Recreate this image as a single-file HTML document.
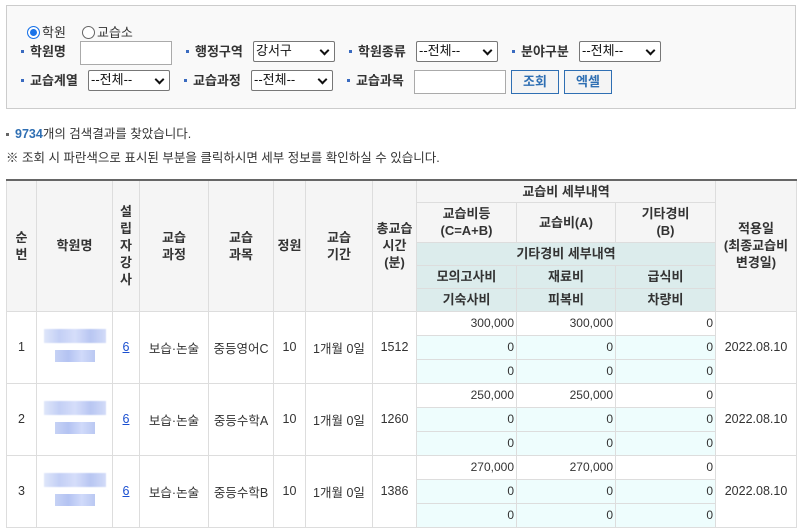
<!DOCTYPE html>
<html><head><meta charset="utf-8"><style>
*{box-sizing:border-box;margin:0;padding:0}
body{width:802px;height:526px;overflow:hidden;background:#fff;font-family:"Liberation Sans","Noto Sans CJK KR",sans-serif;font-size:13px;color:#333;position:relative}
.a{position:absolute;white-space:nowrap}
.box{left:6px;top:5px;width:790px;height:104px;background:#f9f9f9;border:1px solid #ccc}
.lb{font-weight:bold;color:#333;font-size:13px;line-height:16px}
.lb:before{content:"";display:inline-block;width:3px;height:3px;background:#3a6bc0;vertical-align:middle;margin-right:6px;position:relative;top:-1px}
.inp{background:#fff;border:1px solid #aaa}
.sel{background:#fff;border:1px solid #777;border-radius:2px;font-size:13px;line-height:18px;padding-left:2px;color:#111}
.sel:after{content:"";position:absolute;right:6px;top:5px;width:5px;height:5px;border-right:2px solid #111;border-bottom:2px solid #111;transform:rotate(45deg)}
.btn{border:1px solid #2f6fb3;background:#f4f4f4;color:#2f6fb3;font-weight:bold;text-align:center;line-height:21px}
.rad{width:13px;height:13px;border-radius:50%;border:1px solid #666;background:#fff;display:inline-block;vertical-align:-2px;margin-right:2px}
.rad.on{border:1px solid #1a73e8;box-shadow:inset 0 0 0 2px #fff;background:#1a73e8}
table{position:absolute;left:6px;top:179px;border-collapse:collapse;table-layout:fixed;border-top:2px solid #666}
td,th{border:1px solid #ddd;text-align:center;font-size:13px;padding:0}
th{background:#f5f5f5;font-weight:bold;color:#333;line-height:17px}
th.t{background:#dcecec}
td{color:#333;font-size:12.5px}
td.n{text-align:right;padding-right:2px;font-size:12px}
td.c{background:#eefdfd}
.blur{display:inline-block;width:62px;height:14px;background:linear-gradient(90deg,#dfe6fa,#c3cff5,#d6defa,#b8c6f2,#d2dbf8);filter:blur(0.5px)}
.blur2{display:inline-block;width:40px;height:12px;margin-top:4px;background:linear-gradient(90deg,#c6d2f5,#b4c3f2,#d0dafa,#bac8f2)}
a{color:#1a4fd0;text-decoration:underline}
</style></head><body>
<div class="a box"></div>
<div class="a" style="left:27px;top:22px"><span class="rad on"></span>학원</div>
<div class="a" style="left:82px;top:22px"><span class="rad"></span>교습소</div>

<div class="a lb" style="left:21px;top:44px">학원명</div>
<div class="a inp" style="left:80px;top:41px;width:92px;height:24px"></div>
<div class="a lb" style="left:186px;top:44px">행정구역</div>
<div class="a sel" style="left:253px;top:41px;width:82px;height:21px">강서구</div>
<div class="a lb" style="left:349px;top:44px">학원종류</div>
<div class="a sel" style="left:416px;top:41px;width:82px;height:21px">--전체--</div>
<div class="a lb" style="left:512px;top:44px">분야구분</div>
<div class="a sel" style="left:579px;top:41px;width:82px;height:21px">--전체--</div>

<div class="a lb" style="left:21px;top:73px">교습계열</div>
<div class="a sel" style="left:88px;top:70px;width:82px;height:21px">--전체--</div>
<div class="a lb" style="left:184px;top:73px">교습과정</div>
<div class="a sel" style="left:251px;top:70px;width:82px;height:21px">--전체--</div>
<div class="a lb" style="left:347px;top:73px">교습과목</div>
<div class="a inp" style="left:414px;top:70px;width:92px;height:24px"></div>
<div class="a btn" style="left:511px;top:70px;width:48px;height:24px">조회</div>
<div class="a btn" style="left:564px;top:70px;width:48px;height:24px">엑셀</div>

<div class="a" style="left:6px;top:123px;font-size:12.5px"><span style="display:inline-block;width:3px;height:3px;background:#666;vertical-align:middle;margin-right:6px"></span><b style="color:#2f6fb3">9734</b>개의 검색결과를 찾았습니다.</div>
<div class="a" style="left:6px;top:147px;font-size:12.5px">※ 조회 시 파란색으로 표시된 부분을 클릭하시면 세부 정보를 확인하실 수 있습니다.</div>

<table>
<colgroup><col style="width:30px"><col style="width:76px"><col style="width:27px"><col style="width:69px"><col style="width:65px"><col style="width:32px"><col style="width:67px"><col style="width:44px"><col style="width:100px"><col style="width:99px"><col style="width:100px"><col style="width:81px"></colgroup>
<tr style="height:22px"><th rowspan="5">순<br>번</th><th rowspan="5">학원명</th><th rowspan="5">설<br>립<br>자<br>강<br>사</th><th rowspan="5">교습<br>과정</th><th rowspan="5">교습<br>과목</th><th rowspan="5">정원</th><th rowspan="5">교습<br>기간</th><th rowspan="5">총교습<br>시간<br>(분)</th><th colspan="3">교습비 세부내역</th><th rowspan="5">적용일<br>(최종교습비<br>변경일)</th></tr>
<tr style="height:40px"><th>교습비등<br>(C=A+B)</th><th>교습비(A)</th><th>기타경비<br>(B)</th></tr>
<tr style="height:23px"><th class="t" colspan="3">기타경비 세부내역</th></tr>
<tr style="height:23px"><th class="t">모의고사비</th><th class="t">재료비</th><th class="t">급식비</th></tr>
<tr style="height:23px"><th class="t">기숙사비</th><th class="t">피복비</th><th class="t">차량비</th></tr>

<tr style="height:24px"><td rowspan="3">1</td><td rowspan="3"><span class="blur"></span><br><span class="blur2"></span></td><td rowspan="3"><a>6</a></td><td rowspan="3">보습·논술</td><td rowspan="3">중등영어C</td><td rowspan="3">10</td><td rowspan="3">1개월 0일</td><td rowspan="3">1512</td><td class="n">300,000</td><td class="n">300,000</td><td class="n">0</td><td rowspan="3">2022.08.10</td></tr>
<tr style="height:24px"><td class="n c">0</td><td class="n c">0</td><td class="n c">0</td></tr>
<tr style="height:24px"><td class="n c">0</td><td class="n c">0</td><td class="n c">0</td></tr>

<tr style="height:24px"><td rowspan="3">2</td><td rowspan="3"><span class="blur"></span><br><span class="blur2"></span></td><td rowspan="3"><a>6</a></td><td rowspan="3">보습·논술</td><td rowspan="3">중등수학A</td><td rowspan="3">10</td><td rowspan="3">1개월 0일</td><td rowspan="3">1260</td><td class="n">250,000</td><td class="n">250,000</td><td class="n">0</td><td rowspan="3">2022.08.10</td></tr>
<tr style="height:24px"><td class="n c">0</td><td class="n c">0</td><td class="n c">0</td></tr>
<tr style="height:24px"><td class="n c">0</td><td class="n c">0</td><td class="n c">0</td></tr>

<tr style="height:24px"><td rowspan="3">3</td><td rowspan="3"><span class="blur"></span><br><span class="blur2"></span></td><td rowspan="3"><a>6</a></td><td rowspan="3">보습·논술</td><td rowspan="3">중등수학B</td><td rowspan="3">10</td><td rowspan="3">1개월 0일</td><td rowspan="3">1386</td><td class="n">270,000</td><td class="n">270,000</td><td class="n">0</td><td rowspan="3">2022.08.10</td></tr>
<tr style="height:24px"><td class="n c">0</td><td class="n c">0</td><td class="n c">0</td></tr>
<tr style="height:24px"><td class="n c">0</td><td class="n c">0</td><td class="n c">0</td></tr>
</table>
</body></html>
